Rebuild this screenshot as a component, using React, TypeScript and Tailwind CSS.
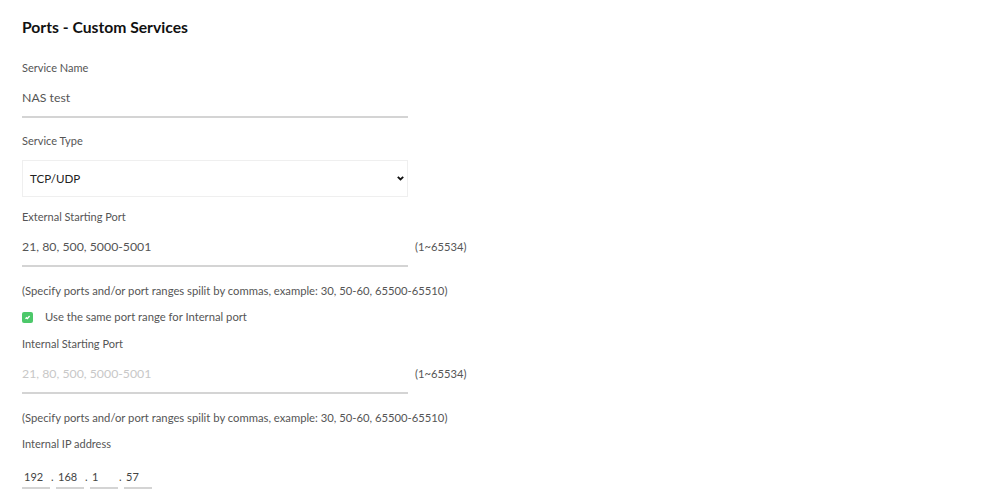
import React from "react";

const font = { fontFamily: "Lato, 'Open Sans', sans-serif" };

function Label({ children }: { children: React.ReactNode }) {
  return <div className="text-[11px] leading-[14px] text-[#555]">{children}</div>;
}

function Underlined({ value, muted }: { value: string; muted?: boolean }) {
  return (
    <div className={`w-[386px] pt-[6px] pb-[10px] leading-[16px] border-b-2 border-[#d4d4d4] text-[12.3px] ${muted ? "text-[#c8c8c8]" : "text-[#555]"}`}>
      {value}
    </div>
  );
}

function Range() {
  return <span className="ml-[7px] mb-[13px] text-[11.2px] leading-[14px] text-[#555]">(1~65534)</span>;
}

function Help() {
  return (
    <div className="text-[11.25px] leading-[14px] text-[#555]">
      (Specify ports and/or port ranges spilit by commas, example: 30, 50-60, 65500-65510)
    </div>
  );
}

function IpField({ v }: { v: string }) {
  return (
    <div className="w-[28px] h-[19px] border-b-2 border-[#d4d4d4] text-[11px] leading-[14px] text-[#444] pl-[2px]">{v}</div>
  );
}

function Dot() {
  return <span className="w-[6px] text-[11px] leading-[14px] text-[#444] pl-[1px]">.</span>;
}

export default function App() {
  return (
    <div className="w-[999px] h-[498px] bg-white overflow-hidden pl-[22px] pt-[17px]" style={font}>
      <div className="text-[15.7px] font-bold text-[#111] leading-[20px]">Ports - Custom Services</div>

      <div className="mt-[24px]"><Label>Service Name</Label></div>
      <div className="mt-[9px]"><Underlined value="NAS test" /></div>

      <div className="mt-[16px]"><Label>Service Type</Label></div>
      <div className="mt-[12px] w-[386px] h-[37px] border border-[#efefef] flex items-center justify-between pl-[7px] pr-[3px] text-[11.6px] text-[#222]">
        <span>TCP/UDP</span>
        <svg width="7" height="5" viewBox="0 0 7 5">
          <path d="M0.8 0.8l2.7 2.7L6.2 0.8" stroke="#111" strokeWidth="1.8" fill="none" />
        </svg>
      </div>

      <div className="mt-[13px]"><Label>External Starting Port</Label></div>
      <div className="mt-[9px] flex items-end">
        <Underlined value="21, 80, 500, 5000-5001" />
        <Range />
      </div>

      <div className="mt-[17px]"><Help /></div>

      <div className="mt-[12px] flex items-center">
        <span className="w-[11px] h-[11px] rounded-[2px] bg-[#4cc86a] flex items-center justify-center">
          <svg width="7" height="7" viewBox="0 0 7 7">
            <path d="M1.5 4.8L3 3.3M3 5.2L5.6 2" stroke="#fff" strokeWidth="1.3" fill="none" />
          </svg>
        </span>
        <span className="ml-[12px] text-[11.25px] leading-[14px] text-[#555]">Use the same port range for Internal port</span>
      </div>

      <div className="mt-[13px]"><Label>Internal Starting Port</Label></div>
      <div className="mt-[9px] flex items-end">
        <Underlined value="21, 80, 500, 5000-5001" muted />
        <Range />
      </div>

      <div className="mt-[17px]"><Help /></div>

      <div className="mt-[12px]"><Label>Internal IP address</Label></div>
      <div className="mt-[19px] flex items-start">
        <IpField v="192" />
        <Dot />
        <IpField v="168" />
        <Dot />
        <IpField v="1" />
        <Dot />
        <IpField v="57" />
      </div>
    </div>
  );
}
